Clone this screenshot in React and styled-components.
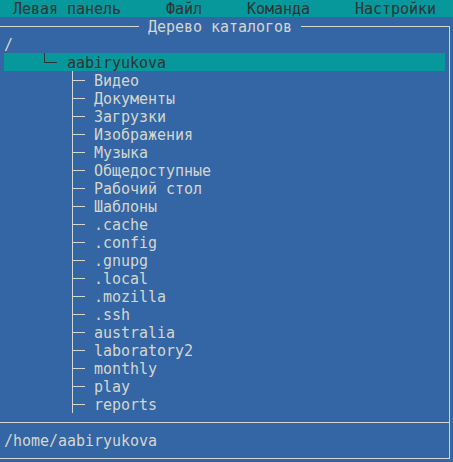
import styled, { createGlobalStyle } from 'styled-components';

const BLUE = '#3465a4';
const TEAL = '#06989a';
const LIGHT = '#d3d7cf';
const DARK = '#2e3436';
const CELL = 9;

const GlobalStyle = createGlobalStyle`
  html, body {
    margin: 0;
    padding: 0;
    background: ${BLUE};
    overflow: hidden;
  }
`;

const Screen = styled.div`
  width: 453px;
  height: 462px;
  background: ${BLUE};
  color: ${LIGHT};
  font-family: 'DejaVu Sans Mono', 'Liberation Mono', monospace;
  font-size: 15px;
  line-height: 18px;
  letter-spacing: -0.03px;
  white-space: pre;
  overflow: hidden;
`;

const MenuBar = styled.div`
  height: 17px;
  background: ${TEAL};
  color: ${DARK};
  padding-left: 13px;
  overflow: hidden;
`;

const Panel = styled.div`
  position: relative;
  margin-top: 9px;
  width: 449px;
  border-top: 1px solid ${LIGHT};
  border-right: 1px solid ${LIGHT};
  border-bottom: 1px solid ${LIGHT};
`;

const Title = styled.div`
  position: absolute;
  top: -10px;
  left: 139px;
  height: 18px;
  line-height: 20px;
  background: ${BLUE};
  color: ${LIGHT};
`;

const Tree = styled.div`
  padding: 8px 4px 9px;
`;

const Row = styled.div`
  display: flex;
  height: 18px;
  line-height: 20px;
  background: ${(p) => (p.$selected ? TEAL : 'transparent')};
  color: ${(p) => (p.$selected ? DARK : LIGHT)};
`;

const Indent = styled.span`
  flex: none;
  width: ${(p) => p.$cols * CELL}px;
`;

const Branch = styled.span`
  flex: none;
  position: relative;
  width: ${CELL * 2}px;
  height: 18px;
  margin-right: ${CELL}px;

  &::before {
    content: '';
    position: absolute;
    left: ${(p) => p.$x}px;
    top: 0;
    width: 1px;
    height: ${(p) => (p.$last ? '10px' : '18px')};
    background: currentColor;
  }

  &::after {
    content: '';
    position: absolute;
    left: ${(p) => p.$x}px;
    right: ${(p) => (p.$last ? '1px' : '0')};
    top: 9px;
    height: 1px;
    background: currentColor;
  }
`;

const Name = styled.span`
  flex: none;
  height: 18px;
`;

const Footer = styled.div`
  border-top: 1px solid ${LIGHT};
  padding: 8px 4px 9px;
  height: 18px;
  line-height: 20px;
`;

const items = [
  'Видео',
  'Документы',
  'Загрузки',
  'Изображения',
  'Музыка',
  'Общедоступные',
  'Рабочий стол',
  'Шаблоны',
  '.cache',
  '.config',
  '.gnupg',
  '.local',
  '.mozilla',
  '.ssh',
  'australia',
  'laboratory2',
  'monthly',
  'play',
  'reports',
];

export default function App() {
  return (
    <Screen>
      <GlobalStyle />
      <MenuBar>{'Левая панель     Файл     Команда     Настройки'}</MenuBar>
      <Panel>
        <Title>{' Дерево каталогов '}</Title>
        <Tree>
          <Row>
            <Name>/</Name>
          </Row>
          <Row $selected>
            <Indent $cols={4} />
            <Branch $x={4} $last />
            <Name>aabiryukova</Name>
          </Row>
          {items.map((name) => (
            <Row key={name}>
              <Indent $cols={7} />
              <Branch $x={5} />
              <Name>{name}</Name>
            </Row>
          ))}
        </Tree>
        <Footer>/home/aabiryukova</Footer>
      </Panel>
    </Screen>
  );
}
